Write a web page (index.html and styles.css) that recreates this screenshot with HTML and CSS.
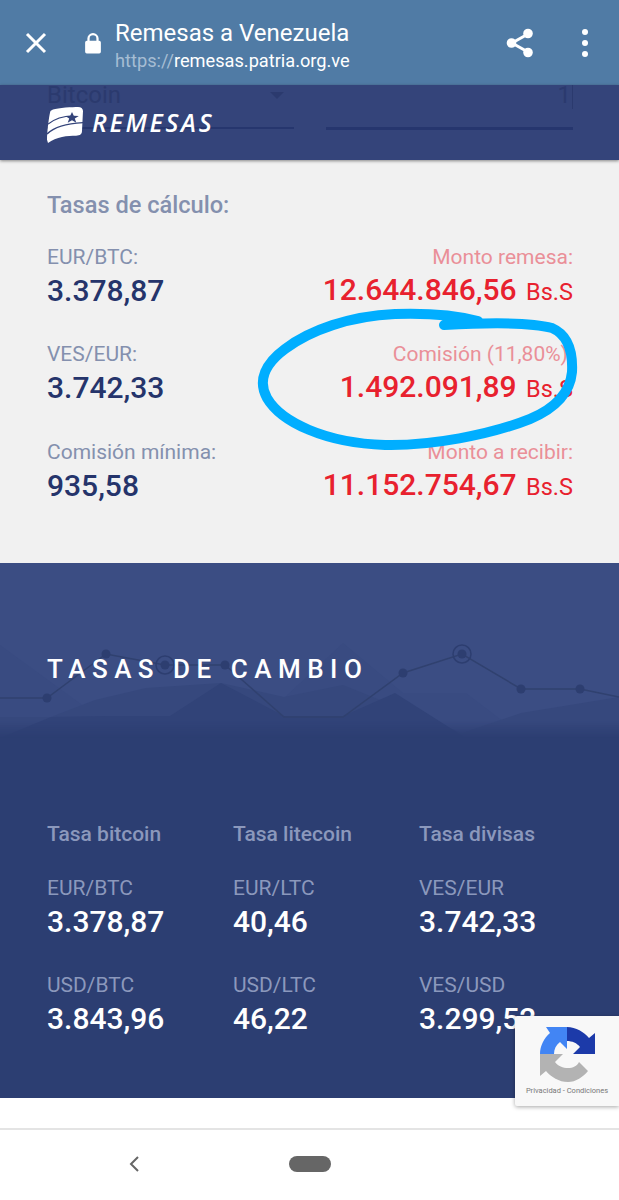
FILE: index.html
```html
<!DOCTYPE html>
<html lang="es">
<head>
  <meta charset="UTF-8">
  <meta name="viewport" content="width=device-width, initial-scale=1.0">
  <title>Remesas a Venezuela</title>
  <link rel="stylesheet" href="styles.css">
</head>

<body>

  <div class="toolbar">
    <svg class="icon-close" viewBox="0 0 22 22"><path d="M2 2 20 20M20 2 2 20"/></svg>
    <svg class="icon-lock" viewBox="0 0 16 20" preserveAspectRatio="none"><path d="M1 9.500a1.500 1.500 0 0 1 1.500-1.500H3V6a5 5 0 0 1 10 0v2h.5A1.500 1.500 0 0 1 15 9.500V18a1.500 1.500 0 0 1-1.500 1.500h-11A1.500 1.500 0 0 1 1 18ZM5 8h6V6a3 3 0 0 0-6 0Z"/></svg>
    <div class="page-info">
      <div class="page-title">Remesas a Venezuela</div>
      <div class="page-url"><span>https://</span>remesas.patria.org.ve</div>
    </div>
    <svg class="icon-share" viewBox="0 0 28 30">
      <path class="share-lines" d="M22 6 6 15 22 24"/>
      <circle cx="22" cy="5.500" r="4.800"/>
      <circle cx="5.500" cy="15" r="4.800"/>
      <circle cx="22" cy="24.500" r="4.800"/>
    </svg>
    <div class="icon-dots"><i></i><i></i><i></i></div>
  </div>

  <header class="brand-bar">
    <!-- form scrolled under the translucent bar -->
    <div class="ghost-form">
      <div class="ghost-field">
        <span>Bitcoin</span>
        <i class="ghost-caret"></i>
      </div>
      <div class="ghost-field ghost-amount">
        <span>1</span>
      </div>
    </div>
    <div class="brand">
      <svg class="brand-mark" viewBox="0 0 36 44" preserveAspectRatio="none">
        <path d="M6 3C11 1 26 0 31 0c3 0 5 2 5 5l-1 24c0 4-2 6-6 6-8 0-20 1-28 9l-1-4C0 30 2 12 3 7c0-2 1-3 3-4Z"/>
        <path class="flag-cut" d="M1 21C8 14 18 11 26 11M0 33C8 23 22 20 36 19"/>
        <path class="flag-star" d="m25 6 1.800 4.800 5 .2-4 3.100 1.500 5-4.300-2.900-4.300 2.900 1.500-5-4-3.100 5-.2Z"/>
      </svg>
      <span class="brand-name">REMESAS</span>
    </div>
  </header>

  <section class="calc">
    <h3 class="calc-title">Tasas de cálculo:</h3>
    <div class="calc-grid">
      <div>
        <div class="calc-label">EUR/BTC:</div>
        <div class="calc-value">3.378,87</div>
      </div>
      <div class="amount">
        <div class="calc-label">Monto remesa:</div>
        <div class="calc-value">12.644.846,56 <small>Bs.S</small></div>
      </div>
      <div>
        <div class="calc-label">VES/EUR:</div>
        <div class="calc-value">3.742,33</div>
      </div>
      <div class="amount">
        <div class="calc-label">Comisión (11,80%):</div>
        <div class="calc-value">1.492.091,89 <small>Bs.S</small></div>
      </div>
      <div>
        <div class="calc-label">Comisión mínima:</div>
        <div class="calc-value">935,58</div>
      </div>
      <div class="amount">
        <div class="calc-label">Monto a recibir:</div>
        <div class="calc-value">11.152.754,67 <small>Bs.S</small></div>
      </div>
    </div>
    <!-- hand drawn marker ring around the fee -->
    <svg class="marker" viewBox="0 0 619 600">
      <path d="M478 321C455 315 425 313 395 314 350 316 310 330 285 349 266 363 257 380 267 398 281 422 325 443 385 445 430 446 490 435 530 419 556 408 570 393 572 372 573 352 568 335 552 328 530 322 480 323 444 325"/>
    </svg>
  </section>

  <section class="rates">
    <svg class="rates-bg" viewBox="0 0 619 175" preserveAspectRatio="none">
      <path class="hill-a" d="M0 82 85 144 107 153 168 153 225 122 284 135 343 80 403 130 466 130 521 172 619 172 619 175 0 175Z"/>
      <path class="hill-b" d="M0 154 51 154 95 137 146 125 221 120 284 134 343 122 462 170 521 150 619 134 619 175 0 175Z"/>
      <path class="hill-c" d="M0 175 51 154 107 153 170 153 221 120 284 153 343 153 395 130 466 175Z"/>
      <path class="chart-line" d="M0 135H47L106 91 165 102H225L284 154H343L403 110 462 91 521 126H580L619 134"/>
      <circle class="chart-dot" cx="47" cy="135" r="4.500"/>
      <circle class="chart-dot" cx="106" cy="91" r="4.500"/>
      <circle class="chart-dot" cx="165" cy="102" r="4.500"/>
      <circle class="chart-ring" cx="165" cy="102" r="9"/>
      <circle class="chart-dot" cx="225" cy="102" r="4.500"/>
      <circle class="chart-dot" cx="403" cy="110" r="4.500"/>
      <circle class="chart-dot" cx="462" cy="91" r="4.500"/>
      <circle class="chart-ring" cx="462" cy="91" r="9"/>
      <circle class="chart-dot" cx="521" cy="126" r="4.500"/>
      <circle class="chart-dot" cx="580" cy="126" r="4.500"/>
    </svg>
    <h2 class="rates-title">TASAS DE CAMBIO</h2>
    <div class="rates-grid">
      <div class="rates-col">
        <h4>Tasa bitcoin</h4>
        <div class="rate-label">EUR/BTC</div>
        <div class="rate-value">3.378,87</div>
        <div class="rate-label">USD/BTC</div>
        <div class="rate-value">3.843,96</div>
      </div>
      <div class="rates-col">
        <h4>Tasa litecoin</h4>
        <div class="rate-label">EUR/LTC</div>
        <div class="rate-value">40,46</div>
        <div class="rate-label">USD/LTC</div>
        <div class="rate-value">46,22</div>
      </div>
      <div class="rates-col">
        <h4>Tasa divisas</h4>
        <div class="rate-label">VES/EUR</div>
        <div class="rate-value">3.742,33</div>
        <div class="rate-label">VES/USD</div>
        <div class="rate-value">3.299,52</div>
      </div>
    </div>
  </section>

  <div class="captcha">
    <svg class="captcha-logo" viewBox="0 0 55 55">
      <path fill="#b3b3b3" d="M0 27H23L15 35C18 39 23 41 28 41 33 41 37 39 39 35L48 44C43 50 36 55 28 55 19 55 11 50 6 44L0 49Z"/>
      <path fill="#4285f4" d="M0 27C0 19 4 11 10 6L6 0H27V22L20 15C16 18 14 22 14 27Z"/>
      <path fill="#1c3aa9" d="M27 0C36 0 44 5 49 11L55 6V27H33L40 20C37 16 32 14 27 14Z"/>
    </svg>
    <div class="captcha-links">Privacidad - Condiciones</div>
  </div>

  <div class="page-end"></div>

  <nav class="nav-bar">
    <svg class="nav-back" viewBox="0 0 12 18"><path d="M10 2 3 9 10 16"/></svg>
    <div class="nav-pill"></div>
  </nav>

</body>
</html>
```

FILE: styles.css
```css
body {
  margin: 0;
  height: 1200px;
  overflow: hidden;
  position: relative;
  font-family: Roboto, "Liberation Sans", sans-serif;
  background-color: #fff;
}

h2, h3, h4 {
  margin: 0;
}

/* browser toolbar */
.toolbar {
  height: 85px;
  display: flex;
  align-items: center;
  background-color: #507ba5;
  color: #fff;
}

.icon-close {
  width: 22px;
  height: 22px;
  margin-left: 25px;
  fill: none;
  stroke: #fff;
  stroke-width: 3;
}

.icon-lock {
  width: 18px;
  height: 22px;
  margin-left: 37px;
  fill: #fff;
}

.page-info {
  margin-left: 13px;
  flex: 1;
}

.page-title {
  font-size: 24px;
  line-height: 30px;
  margin-top: 5px;
}

.page-url {
  font-size: 18.200px;
  line-height: 24px;
  margin-top: 1px;
}

.page-url span {
  color: #a6bdd3;
}

.icon-share {
  width: 28px;
  height: 30px;
  fill: #fff;
}

.share-lines {
  fill: none;
  stroke: #fff;
  stroke-width: 3;
}

.icon-dots {
  display: flex;
  flex-direction: column;
  gap: 5px;
  margin: 0 31px 0 48px;
}

.icon-dots i {
  width: 6px;
  height: 6px;
  border-radius: 50%;
  background-color: #fff;
}

/* site header */
.brand-bar {
  position: relative;
  z-index: 1;
  height: 75px;
  box-sizing: border-box;
  padding: 22px 0 0 47px;
  background-color: #34447a;
  box-shadow: 0 1px 3px rgba(0, 0, 0, .45);
}

.ghost-form {
  position: absolute;
  top: 0;
  left: 47px;
  right: 46px;
  display: flex;
  gap: 32px;
}

.ghost-field {
  flex: 1;
  height: 42px;
  display: flex;
  justify-content: space-between;
  color: #2b3a6e;
  font-size: 24px;
  line-height: 21px;
  border-bottom: 2px solid #26366e;
}

.ghost-caret {
  width: 0;
  height: 0;
  margin: 7px 10px 0 0;
  border-left: 7px solid transparent;
  border-right: 7px solid transparent;
  border-top: 7px solid #2b3a6e;
}

.ghost-amount {
  justify-content: flex-end;
  border-bottom-width: 3px;
}

.ghost-amount span {
  padding-right: 1px;
  height: 24px;
  border-right: 1px solid #2b3a6e;
}

.brand {
  position: relative;
  display: flex;
  align-items: center;
  gap: 9px;
}

.brand-mark {
  width: 36px;
  height: 36px;
  fill: #fff;
}

.flag-cut {
  fill: none;
  stroke: #34447a;
  stroke-width: 1.500;
}

.flag-star {
  fill: #34447a;
}

.brand-name {
  color: #fff;
  font-family: "Open Sans", Roboto, sans-serif;
  font-size: 25px;
  font-style: italic;
  font-weight: 600;
  letter-spacing: 2.700px;
  margin-top: -6px;
}

/* amounts */
.calc {
  height: 403px;
  box-sizing: border-box;
  padding: 31px 46px 0 47px;
  background-color: #f1f1f1;
}

.calc-title {
  color: #8490ae;
  font-size: 23.600px;
  line-height: 28px;
  font-weight: 500;
  margin-bottom: 25.500px;
}

.calc-grid {
  display: grid;
  grid-template-columns: 1fr 1fr;
  row-gap: 30.500px;
}

.calc-label {
  color: #8490ae;
  font-size: 21px;
  line-height: 24px;
}

.calc-value {
  color: #25346b;
  font-size: 30px;
  line-height: 43px;
  font-weight: 500;
}

.calc-value small {
  font-size: 23.500px;
  line-height: 1;
  font-weight: 400;
  margin-left: 2px;
}

.amount {
  text-align: right;
}

.amount .calc-label {
  color: #ea8f98;
}

.amount .calc-value {
  color: #e8212e;
  margin-top: -1px;
}

.marker {
  position: absolute;
  top: 0;
  left: 0;
  width: 619px;
  height: 600px;
  fill: none;
  stroke: #00aeff;
  stroke-width: 10;
  stroke-linecap: round;
}

/* exchange rates */
.rates {
  position: relative;
  height: 535px;
  box-sizing: border-box;
  padding: 91px 0 0 47px;
  background-color: #2c3e72;
  color: #fff;
}

.rates-bg {
  position: absolute;
  top: 0;
  left: 0;
  width: 619px;
  height: 175px;
  background-color: #3b4d83;
  -webkit-mask-image: linear-gradient(#000 90%, transparent);
  mask-image: linear-gradient(#000 90%, transparent);
}

.hill-a {
  fill: #394b81;
}

.hill-b {
  fill: #36487d;
}

.hill-c {
  fill: #314378;
}

.chart-line {
  fill: none;
  stroke: #30416f;
  stroke-width: 1.500;
}

.chart-dot {
  fill: #2d3e70;
}

.chart-ring {
  fill: none;
  stroke: #2d3e70;
  stroke-width: 1.500;
}

.rates-title {
  position: relative;
  font-size: 26px;
  line-height: 30px;
  font-weight: 500;
  letter-spacing: 6.500px;
  margin-bottom: 136px;
}

.rates-grid {
  position: relative;
  display: grid;
  grid-template-columns: repeat(3, 186px);
}

.rates-col h4 {
  color: #8b98bc;
  font-size: 21px;
  line-height: 28px;
  font-weight: 500;
  margin-bottom: 28px;
}

.rate-label {
  color: #8b98bc;
  font-size: 21px;
  line-height: 24px;
}

.rate-value {
  font-size: 30px;
  line-height: 43px;
  font-weight: 500;
  margin-bottom: 30px;
}

/* recaptcha badge */
.captcha {
  position: absolute;
  top: 1016px;
  right: 0;
  width: 104px;
  height: 90px;
  background-color: #f8f8f8;
  box-shadow: 0 1px 4px rgba(0, 0, 0, .35);
  border-radius: 2px 0 0 2px;
  text-align: center;
}

.captcha-logo {
  display: block;
  width: 55px;
  height: 55px;
  margin: 11px 0 0 25px;
}

.captcha-links {
  color: #777;
  font-size: 7.500px;
  line-height: 12px;
  margin-top: 3px;
  white-space: nowrap;
}

/* android navigation */
.page-end {
  height: 30px;
  border-bottom: 2px solid #e4e4e4;
}

.nav-bar {
  height: 70px;
  position: relative;
  display: flex;
  align-items: center;
  padding-left: 128px;
  padding-bottom: 2px;
  box-sizing: border-box;
}

.nav-back {
  width: 12px;
  height: 18px;
  fill: none;
  stroke: #666;
  stroke-width: 2;
}

.nav-pill {
  width: 42px;
  height: 16px;
  margin-left: 149px;
  border-radius: 8px;
  background-color: #666;
}
```
